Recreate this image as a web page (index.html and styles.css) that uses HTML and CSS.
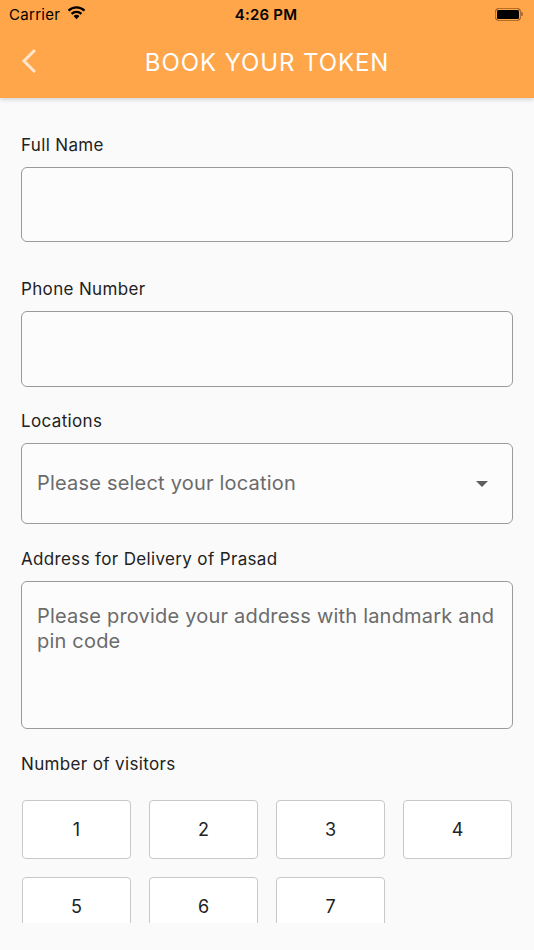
FILE: index.html
```html
<!DOCTYPE html>
<html>
<head>
<meta charset="utf-8">
<link rel="stylesheet" href="styles.css">
</head>
<body>
<header class="appbar">
  <div class="status">
    <div class="status-left">
      <span class="carrier">Carrier</span>
      <svg class="wifi" width="21" height="15" viewBox="0 0 20 14">
        <path d="M10 13.5 L7.2 10.4 A4 4 0 0 1 12.8 10.4 Z" fill="#000"/>
        <path d="M5.3 8.3 A6.8 6.8 0 0 1 14.7 8.3" fill="none" stroke="#000" stroke-width="2.2"/>
        <path d="M2.4 5.2 A10.8 10.8 0 0 1 17.6 5.2" fill="none" stroke="#000" stroke-width="2.2"/>
      </svg>
    </div>
    <span class="time">4:26 PM</span>
    <div class="battery"><div class="battery-fill"></div><div class="battery-tip"></div></div>
  </div>
  <div class="toolbar">
    <svg class="back" width="16" height="26" viewBox="0 0 16 26">
      <polyline points="14,2 3,13 14,24" fill="none" stroke="rgba(255,255,255,0.72)" stroke-width="3"/>
    </svg>
    <h1 class="title">BOOK YOUR TOKEN</h1>
  </div>
</header>
<main class="content">
  <div class="field field-first">
    <label class="label">Full Name</label>
    <div class="input"></div>
  </div>
  <div class="field field-text">
    <label class="label">Phone Number</label>
    <div class="input input-b"></div>
  </div>
  <div class="field field-loc">
    <label class="label">Locations</label>
    <div class="input dropdown">
      <span class="placeholder">Please select your location</span>
      <span class="caret"></span>
    </div>
  </div>
  <div class="field field-mid">
    <label class="label">Address for Delivery of Prasad</label>
    <div class="input textarea">
      <span class="placeholder">Please provide your address with landmark and pin code</span>
    </div>
  </div>
  <div class="field field-mid">
    <label class="label">Number of visitors</label>
    <div class="visitors">
      <button class="vbtn">1</button>
      <button class="vbtn">2</button>
      <button class="vbtn">3</button>
      <button class="vbtn">4</button>
      <button class="vbtn">5</button>
      <button class="vbtn">6</button>
      <button class="vbtn">7</button>
    </div>
  </div>
</main>
</body>
</html>
```
FILE: styles.css
```css
* { box-sizing: border-box; }
html, body { margin: 0; padding: 0; }
body {
  width: 534px;
  height: 950px;
  background: #fafafa;
  font-family: Inter, "Noto Sans", sans-serif;
  color: #212121;
  overflow: hidden;
}
.appbar {
  position: relative;
  z-index: 2;
  height: 98px;
  background: #ffa54a;
  box-shadow: 0 2px 4px rgba(0,0,0,0.14);
}
.status {
  height: 28px;
  display: flex;
  align-items: center;
  justify-content: space-between;
  padding: 0 11px 0 9px;
  font-size: 15px;
  color: #000;
}
.status-left { display: flex; align-items: center; gap: 6px; width: 120px; }
.carrier { font-weight: 400; letter-spacing: 0.3px; }
.wifi { margin-top: -3px; }
.time { font-weight: 600; letter-spacing: 0.2px; }
.battery {
  width: 120px;
  display: flex;
  justify-content: flex-end;
  align-items: center;
}
.battery-fill {
  width: 26px;
  height: 13px;
  border: 1.5px solid #b56e2a;
  border-radius: 3.5px;
  background: #000;
  box-shadow: inset 0 0 0 1px #ffa54a;
}
.battery-tip {
  width: 2px;
  height: 4px;
  background: #b56e2a;
  border-radius: 0 1px 1px 0;
}
.toolbar {
  height: 70px;
  display: flex;
  align-items: center;
  justify-content: center;
  position: relative;
}
.back {
  position: absolute;
  left: 21px;
  top: 20px;
}
.title {
  margin: 0;
  font-size: 24px;
  font-weight: 400;
  color: #fff;
  letter-spacing: 0.9px;
  margin-top: -2px;
}
.content {
  height: 825px;
  overflow: hidden;
  padding: 0 21px;
}
.field { display: flex; flex-direction: column; }
.field-first { padding-top: 37px; }
.field-text { padding-top: 37px; }
.field-loc { padding-top: 24px; }
.field-mid { padding-top: 25px; }
.label {
  font-size: 17px;
  line-height: 20px;
  margin-bottom: 12px;
  color: #222;
  letter-spacing: 0.35px;
}
.input {
  height: 75px;
  border: 1.5px solid #9a9a9a;
  border-radius: 6px;
  background: #fcfcfc;
}
.input-b { height: 76px; }
.dropdown {
  height: 81px;
  display: flex;
  align-items: center;
  justify-content: space-between;
  padding: 0 24px 0 15px;
}
.placeholder {
  font-size: 20px;
  line-height: 25px;
  color: #6b6b6b;
  letter-spacing: 0.2px;
}
.caret {
  width: 0;
  height: 0;
  border-left: 6px solid transparent;
  border-right: 6px solid transparent;
  border-top: 6px solid #5f5f5f;
}
.textarea {
  height: 148px;
  padding: 22px 15px 0 15px;
}
.visitors {
  margin: 14px 1px 0 1px;
  display: grid;
  grid-template-columns: repeat(4, 1fr);
  column-gap: 18px;
  row-gap: 18px;
}
.vbtn {
  height: 59px;
  background: #fff;
  border: 1px solid #c8c8c8;
  border-radius: 4px;
  font-family: Inter, "Noto Sans", sans-serif;
  font-size: 18px;
  color: #222;
  padding: 0;
}
```
